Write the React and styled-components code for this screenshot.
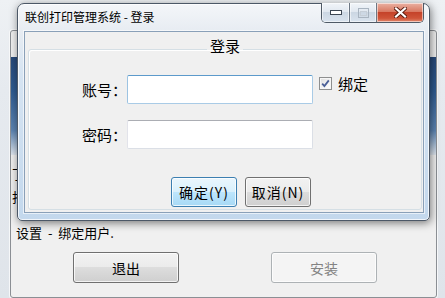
import React from "react";
import styled, { createGlobalStyle } from "styled-components";

const GlobalStyle = createGlobalStyle`
  html, body {
    margin: 0;
    padding: 0;
  }
  body {
    width: 445px;
    height: 298px;
    overflow: hidden;
    font-family: "Noto Sans CJK SC", "DejaVu Sans", sans-serif;
    background: linear-gradient(180deg, #eef1f4 0%, #e6eaef 30%, #dfe4ea 100%);
  }
`;

const Desktop = styled.div`
  position: relative;
  width: 445px;
  height: 298px;
  overflow: hidden;
`;

/* ---------- the window behind ---------- */

const MainWindow = styled.div`
  position: absolute;
  left: 0;
  top: 0;
  width: 445px;
  height: 298px;
  box-sizing: border-box;
  padding: 30px 8px 0 10px;
  display: flex;
  flex-direction: column;
`;

const MainClient = styled.div`
  flex: 1;
  display: flex;
  flex-direction: column;
  border: 1px solid #8b8f94;
  border-radius: 3px 3px 3px 3px;
  background: #f0f0f0;
  box-shadow: 0 0 0 1px rgba(255, 255, 255, 0.7);
`;

const Banner = styled.div`
  margin-top: 26px;
  height: 98px;
  background: linear-gradient(180deg, #27497a 0%, #2f5c92 35%, #5d85b3 75%, #dfe6ee 100%);
`;

const HiddenLines = styled.div`
  margin-top: 11px;
  padding-left: 1px;
  display: flex;
  flex-direction: column;
  gap: 7px;
  font-size: 13px;
  line-height: 16px;
  color: #000;
`;

const StatusText = styled.div`
  margin-top: 20px;
  padding-left: 5px;
  font-size: 13px;
  line-height: 16px;
  word-spacing: 3px;
  color: #000;
`;

const MainButtons = styled.div`
  margin-top: 11px;
  padding-left: 62px;
  display: flex;
  gap: 92px;
`;

const WinButton = styled.button`
  box-sizing: border-box;
  width: ${(p) => p.$w || 66}px;
  height: ${(p) => p.$h || 30}px;
  padding: 0;
  font-family: "Noto Sans CJK SC", "DejaVu Sans", sans-serif;
  font-size: 14px;
  letter-spacing: ${(p) => (p.$spaced ? "1px" : "0")};
  color: ${(p) => (p.$disabled ? "#838383" : "#000")};
  border: 1px solid
    ${(p) => (p.$default ? "#3c7fb1" : p.$disabled ? "#adb2b5" : "#707070")};
  border-radius: 3px;
  background: ${(p) =>
    p.$disabled
      ? "#f4f4f4"
      : p.$default
      ? "linear-gradient(180deg, #eaf6fd 0%, #d9f0fc 49%, #bee6fd 50%, #a7d9f5 100%)"
      : "linear-gradient(180deg, #f2f2f2 0%, #ebebeb 49%, #dddddd 50%, #cfcfcf 100%)"};
  box-shadow: inset 0 0 0 1px rgba(255, 255, 255, 0.75);
`;

/* ---------- dialog ---------- */

const Dialog = styled.div`
  position: absolute;
  left: 17px;
  top: 3px;
  width: 413px;
  height: 218px;
  box-sizing: border-box;
  display: flex;
  flex-direction: column;
  padding: 0 5px 7px 6px;
  border: 1px solid #4c5867;
  border-radius: 7px 7px 5px 5px;
  background: linear-gradient(180deg, #f4f6f9 0px, #e7ecf2 27px, #d6e4f2 70px, #c3d8ed 100%);
  box-shadow: 1px 2px 8px rgba(0, 0, 0, 0.5), inset 0 0 0 1px rgba(255, 255, 255, 0.75);
`;

const TitleBar = styled.div`
  height: 27px;
  display: flex;
  align-items: flex-start;
  justify-content: space-between;
`;

const Title = styled.span`
  margin: 6px 0 0 1px;
  font-size: 12px;
  line-height: 14px;
  color: #000;
`;

const Controls = styled.div`
  margin-top: -1px;
  display: flex;
  height: 19px;
  border: 1px solid #4f5a66;
  border-top: none;
  border-radius: 0 0 5px 5px;
  overflow: hidden;
`;

const Control = styled.div`
  width: ${(p) => p.$w}px;
  display: flex;
  align-items: center;
  justify-content: center;
  border-left: ${(p) => (p.$first ? "none" : "1px solid #6c7784")};
  background: ${(p) =>
    p.$close
      ? "linear-gradient(180deg, #eab1a3 0%, #d97a63 45%, #c5432a 50%, #cf5438 80%, #e2886d 100%)"
      : "linear-gradient(180deg, #f1f5f9 0%, #e1e8f0 45%, #ccd7e3 50%, #d9e3ee 100%)"};
  box-shadow: inset 0 0 0 1px rgba(255, 255, 255, 0.55);
`;

const Client = styled.div`
  flex: 1;
  display: flex;
  flex-direction: column;
  border: 1px solid #8aa0b8;
  background: #f0f0f0;
  box-shadow: 0 0 0 1px rgba(255, 255, 255, 0.6);
`;

const Group = styled.fieldset`
  flex: 1;
  margin: 7px 1px 2px 3px;
  padding: 16px 0 0 0;
  min-width: 0;
  border: 1px solid #d5dfe5;
  border-radius: 3px;
  box-shadow: inset 1px 1px 0 #ffffff;
`;

const Legend = styled.legend`
  margin: 0 auto;
  padding: 0 3px 6px;
  font-size: 15px;
  line-height: 14px;
  color: #000;
`;

const FormGrid = styled.div`
  display: grid;
  grid-template-columns: 98px 186px auto;
  row-gap: 16px;
  align-items: center;
`;

const Label = styled.label`
  text-align: right;
  font-size: 15px;
  line-height: 18px;
  color: #000;
`;

const Input = styled.input`
  box-sizing: border-box;
  width: 186px;
  height: 29px;
  margin: 0;
  padding: 0 4px;
  font-family: "Noto Sans CJK SC", sans-serif;
  font-size: 14px;
  background: #fff;
  outline: none;
  border-radius: 2px;
  border: 1px solid ${(p) => (p.$focus ? "#a9cbe6" : "#dbdfe6")};
  border-top-color: ${(p) => (p.$focus ? "#5c9acb" : "#abadb3")};
  border-left-color: ${(p) => (p.$focus ? "#9cc3e2" : "#e2e3ea")};
`;

const CheckLabel = styled.div`
  align-self: start;
  margin-top: 1px;
  margin-left: 6px;
  display: flex;
  align-items: center;
  gap: 6px;
  font-size: 15px;
  line-height: 15px;
  color: #000;
`;

const Box = styled.span`
  box-sizing: border-box;
  width: 13px;
  height: 13px;
  display: flex;
  align-items: center;
  justify-content: center;
  border: 1px solid #8e8f8f;
  background: linear-gradient(135deg, #dcdcdc 0%, #f4f4f4 60%, #ffffff 100%);
  box-shadow: inset 0 0 0 1px #f6f6f6;
`;

const ButtonRow = styled.div`
  margin-top: 28px;
  padding-left: 142px;
  display: flex;
  gap: 8px;
`;

function App() {
  return (
    <>
      <GlobalStyle />
      <Desktop>
        <MainWindow>
          <MainClient>
            <Banner />
            <HiddenLines>
              <span>丁印机：</span>
              <span>打印状态：</span>
            </HiddenLines>
            <StatusText>设置 - 绑定用户.</StatusText>
            <MainButtons>
              <WinButton $w={106} $h={31}>退出</WinButton>
              <WinButton $w={106} $h={31} $disabled>安装</WinButton>
            </MainButtons>
          </MainClient>
        </MainWindow>

        <Dialog>
          <TitleBar>
            <Title>联创打印管理系统 - 登录</Title>
            <Controls>
              <Control $w={27} $first>
                <svg width="12" height="5" viewBox="0 0 12 5">
                  <rect x="0.5" y="0.5" width="11" height="4" fill="#fff" stroke="#3c4652" />
                </svg>
              </Control>
              <Control $w={26}>
                <svg width="11" height="10" viewBox="0 0 11 10">
                  <rect x="0.5" y="0.5" width="10" height="9" fill="none" stroke="#a9b4c0" />
                  <rect x="2.5" y="3.5" width="6" height="4" fill="none" stroke="#c6ced7" />
                </svg>
              </Control>
              <Control $w={46} $close>
                <svg width="13" height="11" viewBox="0 0 13 11">
                  <path d="M2 1.5 L11 9.5 M11 1.5 L2 9.5" stroke="#5a1c10" strokeWidth="4" strokeLinecap="square" />
                  <path d="M2 1.5 L11 9.5 M11 1.5 L2 9.5" stroke="#ffffff" strokeWidth="2.2" strokeLinecap="square" />
                </svg>
              </Control>
            </Controls>
          </TitleBar>

          <Client>
            <Group>
              <Legend>登录</Legend>
              <FormGrid>
                <Label>账号：</Label>
                <Input $focus />
                <CheckLabel>
                  <Box>
                    <svg width="9" height="9" viewBox="0 0 9 9">
                      <path d="M1.2 4.6 L3.4 7 L7.8 1.4" fill="none" stroke="#4a5f97" strokeWidth="1.8" />
                    </svg>
                  </Box>
                  绑定
                </CheckLabel>
                <Label>密码：</Label>
                <Input type="password" />
                <span />
              </FormGrid>
              <ButtonRow>
                <WinButton $default $spaced>确定(Y)</WinButton>
                <WinButton $spaced>取消(N)</WinButton>
              </ButtonRow>
            </Group>
          </Client>
        </Dialog>
      </Desktop>
    </>
  );
}

export default App;
